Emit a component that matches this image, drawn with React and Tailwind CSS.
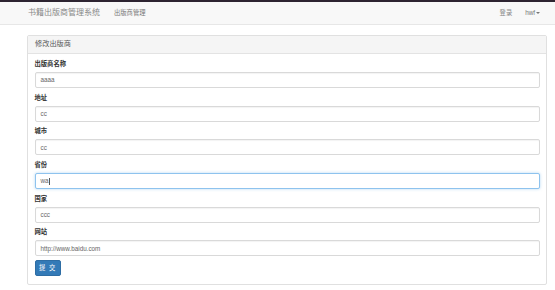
import React from 'react';

const fields = [
  { label: '出版商名称', value: 'aaaa' },
  { label: '地址', value: 'cc' },
  { label: '城市', value: 'cc' },
  { label: '省份', value: 'wa', focus: true },
  { label: '国家', value: 'ccc' },
  { label: '网站', value: 'http://www.baidu.com' },
];

const Field = ({ label, value, focus }) => (
  <div className="mb-[3.7px]">
    <div className="h-[11px] mb-[3px] leading-[11px] text-[6.3px] font-bold text-[#333]">{label}</div>
    <div
      className={
        focus
          ? 'h-[16px] rounded-[2px] border border-[#8ec3ee] shadow-[0_0_3px_rgba(102,175,233,0.5)] bg-white flex items-center px-[5px] text-[6.3px] text-[#666]'
          : 'h-[16px] rounded-[2px] border border-[#d9d9d9] shadow-[inset_0_1px_1px_rgba(0,0,0,0.05)] bg-white flex items-center px-[5px] text-[6.3px] text-[#666]'
      }
    >
      {value}
      {focus && <span className="ml-[0.5px] w-[0.6px] h-[7px] bg-[#555]" />}
    </div>
  </div>
);

export default function App() {
  return (
    <div className="w-[555px] h-[290px] bg-white overflow-hidden font-['Liberation_Sans','Noto_Sans_CJK_SC',sans-serif]">
      <div className="h-[2px] bg-[#2d2431]" />
      <div className="h-[23px] bg-[#f8f8f8] border-b border-[#e7e7e7] flex items-center">
        <div className="ml-[28px] text-[8px] text-[#888]">书籍出版商管理系统</div>
        <div className="ml-[14px] text-[6.3px] text-[#777]">出版商管理</div>
        <div className="ml-auto text-[6.3px] text-[#888]">登录</div>
        <div className="ml-[13px] mr-[15px] text-[6.3px] text-[#777] flex items-center">
          hwf
          <span className="ml-[1px] w-0 h-0 border-l-[2px] border-r-[2px] border-t-[2px] border-l-transparent border-r-transparent border-t-[#777]" />
        </div>
      </div>

      <div className="ml-[27px] mt-[9.5px] w-[520px] h-[250.5px] border border-[#e0e0e0] rounded-[2px] bg-white">
        <div className="h-[18px] bg-[#f5f5f5] border-b border-[#e3e3e3] flex items-center px-[7px] text-[7.2px] text-[#555]">
          修改出版商
        </div>
        <div className="pt-[4.5px] pl-[6.5px] pr-[6.5px]">
          {fields.map((f) => (
            <Field key={f.label} {...f} />
          ))}
          <button className="mt-[2.5px] h-[15.6px] w-[26.5px] rounded-[2px] bg-[#337ab7] border border-[#2e6da4] text-white text-[6.3px] tracking-[1px] flex items-center justify-center">
            提 交
          </button>
        </div>
      </div>
    </div>
  );
}
